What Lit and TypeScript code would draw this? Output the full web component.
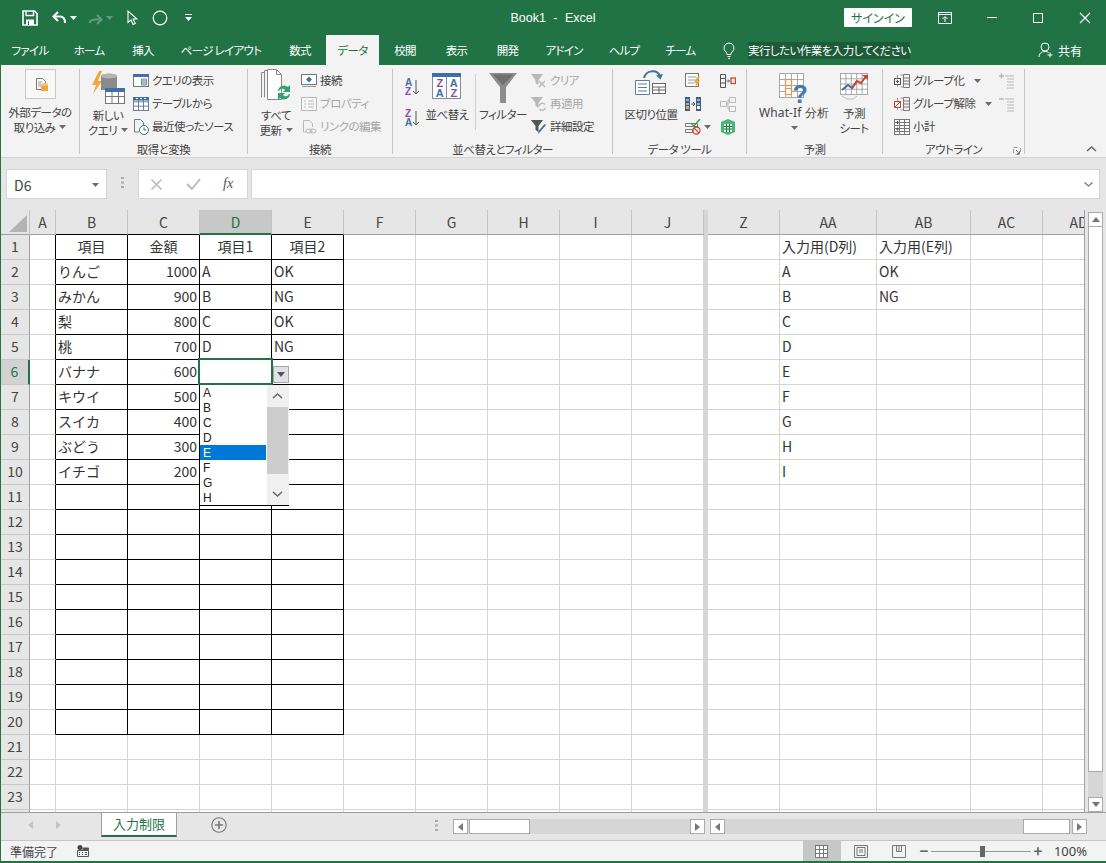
import { LitElement, html, css, svg } from 'lit';
import { customElement } from 'lit/decorators.js';

const GRAY = '#6b6b6b';
const LIGHT = '#b8b8b8';
const BLUE = '#41719c';
const HEAD = '#3f6fa8';
const ORANGE = '#f0a83c';
const GREEN = '#35a06f';
const RED = '#c8472f';

const icon = (w: number, h: number, body: unknown) => html`<svg class="ico" width=${w} height=${h} viewBox="0 0 ${w} ${h}" fill="none">${body}</svg>`;

const caret = (color = GRAY) => icon(7, 4, svg`<path d="M0 0h7L3.5 4z" fill=${color}/>`);

const gridLines = (x: number, y: number, w: number, h: number, cols: number, rows: number, color: string) => {
  const parts = [];
  for (let i = 1; i < cols; i++) parts.push(`M${x + (w * i) / cols} ${y}v${h}`);
  for (let i = 1; i < rows; i++) parts.push(`M${x} ${y + (h * i) / rows}h${w}`);
  return svg`<rect x=${x} y=${y} width=${w} height=${h} fill="#fff" stroke=${color}/><path d=${parts.join('')} stroke=${color}/>`;
};

const ICONS = {
  save: icon(16, 16, svg`<path d="M1 1h11.5L15 3.5V15H1z" stroke="#fff" stroke-width="1.6"/><path d="M4 1.5v4h7.5v-4" stroke="#fff" stroke-width="1.4"/><path d="M4 9.5h8V15H4z" fill="#fff"/><path d="M6 11h1v4H6z" fill="#217346"/>`),
  undo: icon(15, 14, svg`<path d="M6 1L1.5 5.5 6 10" stroke="#fff" stroke-width="2"/><path d="M2 5.5h6c3.5 0 5 2.5 5 6.5" stroke="#fff" stroke-width="2"/>`),
  redo: icon(15, 14, svg`<path d="M9 4L13.5 8.5 9 13" stroke="#5f9b7d" stroke-width="2"/><path d="M13 8.5H8C4 8.5 2 9 1.5 12" stroke="#5f9b7d" stroke-width="2"/>`),
  cursor: icon(11, 16, svg`<path d="M1 1v11.5l3-2.7 2 4.7 2.2-1-2-4.5H10z" stroke="#fff" stroke-width="1.1"/>`),
  circle: icon(16, 16, svg`<circle cx="8" cy="8" r="6.8" stroke="#fff" stroke-width="1.2"/>`),
  custom: icon(7, 7, svg`<path d="M0 0h7v1H0z" fill="#fff"/><path d="M0 3h7L3.5 7z" fill="#fff"/>`),
  display: icon(14, 12, svg`<path d="M.5.5h13v11H.5z" stroke="#fff"/><path d="M.5 2.5h13" stroke="#fff"/><path d="M7 10V5M4.5 7L7 4.5 9.5 7" stroke="#fff"/>`),
  min: icon(10, 2, svg`<path d="M0 .5h10" stroke="#fff"/>`),
  max: icon(10, 10, svg`<path d="M.5.5h9v9h-9z" stroke="#fff"/>`),
  close: icon(12, 12, svg`<path d="M1 1l10 10M11 1L1 11" stroke="#fff" stroke-width="1.1"/>`),
  bulb: icon(12, 17, svg`<path d="M6 1a5 5 0 0 0-3 9c.8.7 1 1.5 1 2.5h4c0-1 .2-1.8 1-2.5a5 5 0 0 0-3-9z" stroke="#fff"/><path d="M4.5 14.5h3M5 16.5h2" stroke="#fff"/>`),
  person: icon(15, 16, svg`<circle cx="7" cy="5" r="4" stroke="#fff"/><path d="M1 15c0-3 2-5.5 6-5.5 1.5 0 2.5.3 3.5 1" stroke="#fff"/><path d="M9.5 13h5M12 10.5v5" stroke="#fff"/>`),

  extData: icon(31, 30, svg`<rect x=".5" y=".5" width="30" height="29" fill="#f8f8f8" stroke="#c8c8c8"/><path d="M11.5 9.5h6l3 3v8h-9z" fill="#fff" stroke="#777"/><path d="M13 13h4M13 15h3M13 17h3" stroke="#999"/><path d="M16 15.5h7V22h-7z" fill=${ORANGE}/><ellipse cx="19.5" cy="15.5" rx="3.5" ry="1.5" fill="#f6c57a"/>`),
  newQuery: icon(34, 36, svg`<path d="M8 2L1 16h4l-3 9 9-13H7l4-10z" fill=${ORANGE}/><path d="M10 7c0-3 16-3 16 0v14H10z" fill="#8a8a8a"/><ellipse cx="18" cy="7" rx="8" ry="2.6" fill="#b5b5b5"/><rect x="14.5" y="19.5" width="19" height="15" fill="#fff" stroke="#777"/><rect x="14" y="19" width="20" height="4" fill=${HEAD}/><path d="M14.5 27.5h19M21 23v11M27.5 23v11" stroke="#777"/>`),
  refreshAll: icon(31, 36, svg`<path d="M.5 3.5v25M3.5 1.5v27M.5 3.5h3M3.5 1.5h3" stroke="#8a8a8a"/><path d="M6.5.5h9l5 5v25h-14z" fill="#fff" stroke="#8a8a8a"/><path d="M15.5.5v5h5" stroke="#8a8a8a"/><path d="M17 22a6 6 0 0 1 10-4l2-2v7h-7l2-2a3.5 3.5 0 0 0-6 1z" fill=${GREEN}/><path d="M29 25a6 6 0 0 1-10 4l-2 2v-7h7l-2 2a3.5 3.5 0 0 0 6-1z" fill=${GREEN}/>`),
  showQuery: icon(16, 16, svg`<rect x=".5" y="1.5" width="15" height="12" fill="#fff" stroke="#777"/><rect y="1" width="16" height="3" fill=${HEAD}/><path d="M8.5 6h5v6h-5z" fill="#dfe6ef" stroke="#7b8ba0"/><path d="M8.5 8h5M8.5 10h5" stroke="#7b8ba0"/>`),
  fromTable: icon(16, 16, svg`${gridLines(0.5, 1.5, 15, 13, 3, 3, '#6d7f96')}<rect y="1" width="16" height="3.5" fill=${HEAD}/><path d="M3 2.5h2M7 2.5h2M11 2.5h2" stroke="#fff"/>`),
  recentSource: icon(16, 16, svg`<path d="M1.5.5h6l3 3V6M1.5.5V13H6" stroke="#777"/><circle cx="11" cy="11" r="4.5" fill="#fff" stroke=${BLUE}/><path d="M11 8.5V11h2.5" stroke=${BLUE}/>`),
  connection: icon(16, 16, svg`<rect x=".5" y="1.5" width="15" height="10" fill="#fff" stroke="#777"/><path d="M8 3.5L11 6.5 8 9.5 5 6.5z" fill=${BLUE}/><path d="M1 13.5h14" stroke="#999"/>`),
  properties: icon(16, 16, svg`<rect x=".5" y="1.5" width="15" height="13" fill="#f8f8f8" stroke=${LIGHT}/><path d="M3 5h2M7 5h6M3 8h2M7 8h6M3 11h2M7 11h6" stroke=${LIGHT}/>`),
  editLinks: icon(16, 16, svg`<path d="M2.5 1.5h6l3 3V8M2.5 1.5V13H5" stroke=${LIGHT}/><ellipse cx="8" cy="12" rx="3" ry="2" stroke=${LIGHT}/><ellipse cx="12" cy="12" rx="3" ry="2" stroke=${LIGHT}/>`),
  sortAZ: icon(15, 20, svg`<text x="0" y="9" font-family="Liberation Sans" font-size="10" font-weight="700" fill=${HEAD}>A</text><text x="0" y="18" font-family="Liberation Sans" font-size="10" font-weight="700" fill="#8d4da0">Z</text><path d="M11 3v14M8 14l3 3 3-3" stroke="#555"/>`),
  sortZA: icon(15, 20, svg`<text x="0" y="9" font-family="Liberation Sans" font-size="10" font-weight="700" fill="#8d4da0">Z</text><text x="0" y="18" font-family="Liberation Sans" font-size="10" font-weight="700" fill=${HEAD}>A</text><path d="M11 3v14M8 14l3 3 3-3" stroke="#555"/>`),
  sortBig: icon(30, 38, svg`<rect x=".5" y="4.5" width="28" height="25" fill="#fff" stroke="#7f8fa3"/><rect y="4" width="29" height="4" fill=${HEAD}/><path d="M14.5 8v22" stroke="#7f8fa3"/><g font-family="Liberation Sans" font-size="11" font-weight="700" text-anchor="middle"><text x="7.5" y="18" fill="#8d4da0">Z</text><text x="21.5" y="18" fill=${HEAD}>A</text><text x="7.5" y="28" fill=${HEAD}>A</text><text x="21.5" y="28" fill="#8d4da0">Z</text></g>`),
  filterBig: icon(28, 38, svg`<path d="M0 4h28L17 18v16h-6V18z" fill="#8c8c8c"/><path d="M4 5.5h20L14 16z" fill="#6f6f6f"/>`),
  clear: icon(16, 16, svg`<path d="M0 1h12L7.5 7v5l-3-2V7z" fill=${LIGHT}/><path d="M8 8l6 6M14 8l-6 6" stroke=${LIGHT} stroke-width="1.5"/>`),
  reapply: icon(16, 16, svg`<path d="M0 1h12L7.5 7v5l-3-2V7z" fill=${LIGHT}/><path d="M8 10a3.5 3.5 0 0 1 6-1.5M14.5 12a3.5 3.5 0 0 1-6 1" stroke=${LIGHT} stroke-width="1.3"/>`),
  advanced: icon(16, 16, svg`<path d="M0 1h12L7.5 7v6l-3-2V7z" fill="#555"/><path d="M15 6l-6 7-2 2 .5-3 6-7z" fill=${BLUE}/>`),
  textCols: icon(32, 38, svg`<path d="M.5 11.5h14v14H.5z" fill="#fff" stroke="#5b7fa6"/><path d="M3 15h9M3 18.5h9M3 22h9" stroke="#5b7fa6"/><rect x="17.5" y="14.5" width="13" height="10" fill="#fff" stroke="#666"/><path d="M17.5 18h13M17.5 21h13M24 18v6.5" stroke="#666"/><path d="M9 9C11 1 22 0 25 7" stroke=${BLUE} stroke-width="2"/><path d="M21 6.5l4.5 4 2.5-5.5z" fill=${BLUE}/>`),
  flash: icon(16, 16, svg`<rect x=".5" y=".5" width="13" height="13" fill="#fff" stroke="#777"/><path d="M3 4h8M3 7h8M3 10h6" stroke="#999"/><path d="M12 4l-3 6h2l-1 5 5-7h-2.5l2-4z" fill=${ORANGE}/>`),
  dedupe: icon(16, 16, svg`<path d="M0 1h5v14H0zM11 1h5v14h-5z" fill="#3f5f85"/><path d="M1 4h3M1 8h3M12 4h3M12 8h3" stroke="#fff"/><path d="M1 10h3v3H1z" fill=${ORANGE}/><path d="M12 10h3v3h-3z" fill="#fff"/><path d="M6 8h3M8 6l2 2-2 2" stroke="#555"/>`),
  validate: icon(16, 16, svg`<path d="M.5 4.5h12v3h-12zM.5 10.5h7v3h-7z" stroke="#777"/><path d="M6 4l3 3 6-7" stroke=${GREEN} stroke-width="1.5"/><circle cx="11.5" cy="11.5" r="3.5" fill="#fff" stroke=${RED} stroke-width="1.3"/><path d="M9 9l5 5" stroke=${RED} stroke-width="1.3"/>`),
  consolidate: icon(16, 16, svg`<path d="M.5 1.5h5v13h-5z" stroke="#555"/><path d="M.5 5.5h5M.5 10h5" stroke="#555"/><path d="M6.5 8h3M8 6.5L9.5 8 8 9.5" stroke=${BLUE}/><rect x="11" y="5" width="4.5" height="5.5" stroke=${RED} stroke-width="1.3"/>`),
  relation: icon(16, 16, svg`<path d="M.5 5.5h6v5h-6zM9.5 1.5h6v5h-6zM9.5 10.5h6v5h-6z" stroke=${LIGHT}/><path d="M6.5 8H8V4h1.5M8 8v5h1.5" stroke=${LIGHT}/>`),
  model: icon(16, 16, svg`<path d="M8 0l7 3v10l-7 3-7-3V3z" fill="#4fb27a"/><path d="M4 5h8v8H4z" fill="#d6efe0"/><path d="M4 7.5h8M4 10h8M6.5 5v8M9.5 5v8" stroke="#2a7a4b"/>`),
  whatIf: icon(30, 37, svg`${gridLines(0.5, 4.5, 24, 24, 4, 4, '#a8a8a8')}<rect x="6.5" y="10.5" width="6" height="6" fill="#fff" stroke="#d99a5b" stroke-width="1.3"/><rect x="6.5" y="19.5" width="6" height="6" fill="#fff" stroke="#d99a5b" stroke-width="1.3"/><text x="21" y="34" font-family="Liberation Sans" font-size="25" font-weight="700" text-anchor="middle" fill="#3e78b5">?</text>`),
  forecast: icon(29, 37, svg`${gridLines(0.5, 4.5, 27, 21, 5, 4, '#a8a8a8')}<path d="M2 21l6-5 4 3 5-7" stroke=${BLUE} stroke-width="2"/><path d="M12 19l5-7 4 2 6-8" stroke=${RED} stroke-width="2"/><path d="M22 6h6v5z" fill=${RED}/><path d="M2 27l5 3h6l4-3" stroke="#bbb"/>`),
  group: icon(16, 16, svg`<rect x=".5" y="5.5" width="6" height="6" stroke="#555"/><path d="M2 8.5h3M3.5 7v3" stroke="#555"/><path d="M9.5 1.5h6v13h-6z" stroke="#777"/><path d="M9.5 5h6M9.5 8h6M9.5 11h6" stroke="#777"/><path d="M6.5 2h3M6.5 14h3M3.5 2v3M3.5 12v2" stroke="#999"/>`),
  ungroup: icon(16, 16, svg`<rect x=".5" y="5.5" width="6" height="6" stroke=${RED}/><path d="M1 11L6 6" stroke=${RED}/><path d="M9.5 1.5h6v13h-6z" stroke="#777"/><path d="M9.5 5h6M9.5 8h6M9.5 11h6" stroke="#777"/><path d="M6.5 2h3M6.5 14h3M3.5 2v3M3.5 12v2" stroke="#999"/>`),
  subtotal: icon(16, 16, svg`${gridLines(0.5, 0.5, 15, 15, 3, 5, '#777')}<path d="M2 3.5h3M3.5 2v3M2 10h3M3.5 8.5v3" stroke="#555"/>`),
  showDetail: icon(15, 16, svg`<path d="M6 3h9M8 6h7M8 9h7M8 12h7M8 15h7" stroke=${LIGHT}/><path d="M0 3h5M2.5.5v5" stroke=${LIGHT} stroke-width="1.5"/>`),
  hideDetail: icon(15, 16, svg`<path d="M6 3h9M8 6h7M8 9h7M8 12h7M8 15h7" stroke=${LIGHT}/><path d="M0 3h5" stroke=${LIGHT} stroke-width="1.5"/>`),
  launcher: icon(8, 8, svg`<path d="M.5.5h7v7h-7z" stroke="#999" stroke-dasharray="4 3.5"/><path d="M3 3l3.5 3.5M6.5 4v2.5H4" stroke="#777"/>`),
  chevUp: icon(11, 6, svg`<path d="M1 5l4.5-4L10 5" stroke="#666" stroke-width="1.5"/>`),
  chevDown: icon(9, 5, svg`<path d="M.5.5L4.5 4l4-3.5" stroke="#777" stroke-width="1.3"/>`),
  cross: icon(13, 13, svg`<path d="M1.5 1.5l10 10M11.5 1.5l-10 10" stroke=${LIGHT} stroke-width="1.5"/>`),
  check: icon(15, 13, svg`<path d="M1 6l5 5 8-10" stroke=${LIGHT} stroke-width="1.8"/>`),
  dots: icon(3, 11, svg`<path d="M0 0h3v2H0zM0 4.5h3v2H0zM0 9h3v2H0z" fill="#aaa"/>`),
  plusCircle: icon(16, 16, svg`<circle cx="8" cy="8" r="7.2" stroke="#777" stroke-width="1.1"/><path d="M4 8h8M8 4v8" stroke="#777" stroke-width="1.6"/>`),
  macro: icon(12, 12, svg`<circle cx="3" cy="2.5" r="2.5" fill="#444"/><path d="M.5 5.5h11v6H.5z" stroke="#555"/><path d="M2 7.5h1M5 7.5h1M8 7.5h2M2 9.5h1M5 9.5h1M8 9.5h2M6 3h5.5v2H6z" fill="#555" stroke="#555"/>`),
  viewNormal: icon(13, 13, svg`${gridLines(0.5, 0.5, 12, 12, 3, 3, '#777')}`),
  viewPage: icon(14, 13, svg`<path d="M.5.5h13v12H.5z" stroke="#777"/><path d="M3 2.5h8v8H3zM5 5h4M5 7h4" stroke="#777"/>`),
  viewBreak: icon(14, 13, svg`<path d="M.5.5h13v12H.5z" stroke="#777"/><path d="M4.5.5v6h5v-6M7 .5v6" stroke="#777"/>`),
};

const tri = (dir: 'l' | 'r' | 'u' | 'd', color = '#777') => {
  const d = { l: 'M5 0v8L0 4z', r: 'M0 0v8l5-4z', u: 'M0 5h8L4 0z', d: 'M0 0h8L4 5z' }[dir];
  return dir === 'l' || dir === 'r'
    ? icon(5, 8, svg`<path d=${d} fill=${color}/>`)
    : icon(8, 5, svg`<path d=${d} fill=${color}/>`);
};

const TABS: [string, number][] = [
  ['ファイル', 60], ['ホーム', 58], ['挿入', 50], ['ページ レイアウト', 106], ['数式', 52], ['データ', 53],
  ['校閲', 52], ['表示', 51], ['開発', 51], ['アドイン', 62], ['ヘルプ', 58], ['チーム', 55],
];

const LEFT_COLS: [string, number][] = [['A', 26], ['B', 72], ['C', 72], ['D', 72], ['E', 72], ['F', 72], ['G', 72], ['H', 72], ['I', 72], ['J', 72]];
const RIGHT_COLS: [string, number][] = [['Z', 72], ['AA', 97], ['AB', 94], ['AC', 72], ['AD', 72]];

// row -> col letter -> text
const DATA: Record<number, Record<string, string>> = {
  1: { B: '項目', C: '金額', D: '項目1', E: '項目2', AA: '入力用(D列)', AB: '入力用(E列)' },
  2: { B: 'りんご', C: '1000', D: 'A', E: 'OK', AA: 'A', AB: 'OK' },
  3: { B: 'みかん', C: '900', D: 'B', E: 'NG', AA: 'B', AB: 'NG' },
  4: { B: '梨', C: '800', D: 'C', E: 'OK', AA: 'C' },
  5: { B: '桃', C: '700', D: 'D', E: 'NG', AA: 'D' },
  6: { B: 'バナナ', C: '600', AA: 'E' },
  7: { B: 'キウイ', C: '500', AA: 'F' },
  8: { B: 'スイカ', C: '400', AA: 'G' },
  9: { B: 'ぶどう', C: '300', AA: 'H' },
  10: { B: 'イチゴ', C: '200', AA: 'I' },
};

const ROWS = Array.from({ length: 24 }, (_, i) => i + 1);
const LIST = ['A', 'B', 'C', 'D', 'E', 'F', 'G', 'H'];

@customElement('app-root')
export class AppRoot extends LitElement {
  static styles = css`
    :host {
      display: block;
      width: 1106px;
      height: 863px;
      overflow: hidden;
      font-family: "Noto Sans CJK JP", "Noto Sans", sans-serif;
      color: #444;
    }
    .ico { display: block; flex: none; }
    .app { display: flex; flex-direction: column; height: 863px; background: #e6e6e6; }

    /* title bar */
    .title {
      height: 35px;
      background: #217346;
      color: #fff;
      display: grid;
      grid-template-columns: 1fr auto 1fr;
      align-items: center;
      font-size: 12px;
    }
    .qat { display: flex; align-items: center; padding-left: 22px; }
    .m3 { margin-left: 3px; }
    .m11 { margin-left: 11px; }
    .m14 { margin-left: 14px; }
    .m17 { margin-left: 17px; }
    .book { font-family: "Liberation Sans", sans-serif; font-size: 12.5px; word-spacing: 4px; }
    .winbtns { display: flex; justify-content: flex-end; align-items: center; padding-right: 15px; }
    .signin {
      width: 68px;
      height: 19px;
      background: #fff;
      color: #217346;
      border-radius: 1px;
      font-size: 12px;
      line-height: 19px;
      text-align: center;
      font-feature-settings: "palt";
    }
    .wb1 { margin-left: 26px; }
    .wb2 { margin-left: 35px; }
    .wb3 { margin-left: 36px; }

    /* tabs */
    .tabs {
      height: 30px;
      background: #217346;
      color: #fff;
      display: flex;
      align-items: stretch;
      font-size: 11.5px;
      letter-spacing: -0.7px;
      font-feature-settings: "palt";
    }
    .tab { flex: none; text-align: center; line-height: 30px; }
    .tab.on { background: #f3f3f3; color: #217346; }
    .tell { display: flex; align-items: center; margin-left: 15px; flex: 1; padding-right: 24px; }
    .tell-text {
      margin-left: 13px;
      width: 162px;
      height: 17px;
      line-height: 17px;
      background: #1c5a38;
      white-space: nowrap;
      letter-spacing: -0.55px;
    }
    .share { margin-left: auto; display: flex; align-items: center; gap: 5px; font-size: 12px; letter-spacing: 0; }

    .body { flex: 1; display: flex; flex-direction: column; border-left: 1px solid #217346; min-height: 0; }

    /* ribbon */
    .ribbon {
      height: 93px;
      box-sizing: border-box;
      background: #f3f3f3;
      border-bottom: 1px solid #d2d2d2;
      padding-top: 4px;
      display: flex;
      font-size: 11.5px;
      letter-spacing: -0.5px;
      font-feature-settings: "palt";
      line-height: 14.5px;
      white-space: nowrap;
    }
    .grp {
      position: relative;
      flex: none;
      box-sizing: border-box;
      height: 85px;
      border-right: 1px solid #c6c6c6;
    }
    .g1 { width: 79px; }
    .g2 { width: 168px; }
    .g3 { width: 145px; }
    .g4 { width: 220px; }
    .g5 { width: 134px; }
    .g6 { width: 136px; }
    .g7 { width: 142px; }
    .grp-body { display: flex; height: 73px; }
    .grp-label { text-align: center; line-height: 14px; color: #444; }
    .launcher { position: absolute; right: 3px; bottom: -1px; }
    .big { display: flex; flex-direction: column; align-items: center; flex: none; text-align: center; }
    .w78 { width: 78px; }
    .w50 { width: 50px; margin-left: 3px; }
    .w44 { width: 44px; margin-left: 5px; }
    .w56 { width: 56px; margin-left: 10px; }
    .w74 { width: 74px; margin-left: 10px; }
    .w40 { width: 40px; margin-left: 3px; }
    .gap6 { margin-top: 6px; }
    .gap3 { margin-top: 3px; }
    .caret-line { display: flex; align-items: center; justify-content: center; gap: 4px; }
    .caret-below { display: flex; justify-content: center; padding-top: 5px; }
    .wif { font-family: "Noto Sans", sans-serif; font-size: 12px; letter-spacing: 0.1px; }
    .list { display: flex; flex-direction: column; flex: none; }
    .li { height: 23px; display: flex; align-items: center; gap: 3px; }
    .li.off { color: #a6a6a6; }
    .li .cm { margin-left: 7px; }
    .sortcol { margin-left: 12px; padding-top: 8px; display: flex; flex-direction: column; gap: 11px; flex: none; }
    .vsep { width: 1px; height: 56px; margin: 5px 0 0 6px; background: #d0d0d0; flex: none; }
    .ml7 { margin-left: 7px; }
    .ml6 { margin-left: 6px; }
    .ml11 { margin-left: 11px; }
    .col1 { width: 28px; }
    .g7 .outline { width: 105px; }
    .collapse { align-self: flex-end; margin: 0 9px 5px auto; }

    /* formula bar */
    .fbar { height: 52px; box-sizing: border-box; padding: 11px 0 0 5px; display: flex; align-items: flex-start; background: #e6e6e6; }
    .namebox {
      width: 101px;
      height: 30px;
      box-sizing: border-box;
      background: #fff;
      border: 1px solid #d4d4d4;
      display: flex;
      align-items: center;
      justify-content: space-between;
      padding: 2px 7px 0;
      font-size: 14px;
    }
    .fdots { margin: 8px 0 0 14px; }
    .fxbox {
      margin-left: 14px;
      width: 110px;
      height: 30px;
      box-sizing: border-box;
      background: #fff;
      border: 1px solid #d4d4d4;
      display: flex;
      align-items: center;
      padding-left: 11px;
    }
    .fx { margin-left: 22px; font-family: "Liberation Serif", serif; font-style: italic; font-size: 14px; color: #555; }
    .fxbox .check { margin-left: 23px; }
    .finput {
      margin-left: 3px;
      width: 849px;
      height: 30px;
      box-sizing: border-box;
      background: #fff;
      border: 1px solid #d4d4d4;
      display: flex;
      align-items: center;
      justify-content: flex-end;
      padding-right: 6px;
    }

    /* sheet */
    .sheet-area { height: 602px; display: flex; background: #fff; }
    .pane { position: relative; overflow: hidden; flex: none; height: 602px; }
    .pane-l { width: 703px; }
    .pane-r { width: 377px; box-sizing: border-box; border-right: 1px solid #9f9f9f; }
    .split { width: 4px; flex: none; background: #d6d6d6; }
    .grid { display: grid; grid-auto-rows: 25px; font-size: 14px; color: #333; }
    .c {
      box-sizing: border-box;
      border-right: 1px solid #d4d4d4;
      border-bottom: 1px solid #d4d4d4;
      padding: 0 2px;
      line-height: 23px;
      white-space: nowrap;
      overflow: hidden;
    }
    .num { text-align: right; }
    .mid { text-align: center; }
    .br { border-right-color: #000; }
    .bb { border-bottom-color: #000; }
    .hc {
      background: #e6e6e6;
      box-sizing: border-box;
      border-right: 1px solid #c4c4c4;
      border-bottom: 1px solid #9f9f9f;
      text-align: center;
      line-height: 24px;
      color: #444;
      white-space: nowrap;
      overflow: hidden;
    }
    .hc.bb { border-bottom-color: #000; }
    .hc.sel { background: #c8c8c8; color: #217346; border-bottom: 2px solid #217346; }
    .rh {
      background: #e6e6e6;
      box-sizing: border-box;
      border-right: 1px solid #9f9f9f;
      border-bottom: 1px solid #c8c8c8;
      text-align: center;
      line-height: 22px;
      color: #444;
    }
    .rh.sel { background: #d2d2d2; color: #217346; border-right: 2px solid #217346; }
    .corner { position: relative; display: flex; align-items: flex-end; justify-content: flex-end; padding: 0 2px 2px 0; }
    .cursor {
      position: absolute;
      left: 197px;
      top: 148px;
      width: 75px;
      height: 27px;
      box-sizing: border-box;
      border: 2px solid #217346;
    }
    .ddbtn {
      position: absolute;
      left: 272px;
      top: 156px;
      width: 16px;
      height: 17px;
      box-sizing: border-box;
      background: #dfe2e8;
      border: 1px solid #a6a6a6;
      display: flex;
      align-items: center;
      justify-content: center;
    }
    .popup {
      position: absolute;
      left: 198px;
      top: 175px;
      width: 90px;
      height: 121px;
      box-sizing: border-box;
      background: #fff;
      border-left: 1px solid #000;
      border-bottom: 1px solid #000;
      display: flex;
      font-family: "Liberation Sans", sans-serif;
      font-size: 12px;
      color: #222;
    }
    .opts { width: 66px; flex: none; }
    .opt { height: 15px; line-height: 16px; padding-left: 3px; }
    .opt.on { background: #0078d7; color: #fff; }
    .pscroll { flex: 1; margin-left: 1px; background: #f0f0f0; display: flex; flex-direction: column; align-items: center; padding: 0 1px 0 0; }
    .parrow { height: 22px; display: flex; align-items: center; justify-content: center; flex: none; }
    .pthumb { width: 100%; height: 67px; background: #cdcdcd; flex: none; }
    .pspace { flex: 1; }
    .vs { width: 21px; flex: none; background: #e6e6e6; padding: 2px 3px 0 3px; box-sizing: border-box; display: flex; flex-direction: column; }
    .sbtn {
      box-sizing: border-box;
      background: #fff;
      border: 1px solid #ababab;
      display: flex;
      align-items: center;
      justify-content: center;
      flex: none;
    }
    .vbtn { width: 15px; height: 15px; }
    .vthumb { width: 15px; height: 545px; box-sizing: border-box; background: #fff; border: 1px solid #ababab; border-top: 0; }
    .vtrack { width: 15px; flex: 1; background: #d6d6d6; }

    /* sheet tabs */
    .sbar {
      height: 29px;
      box-sizing: border-box;
      background: #e6e6e6;
      border-top: 1px solid #9f9f9f;
      border-bottom: 1px solid #c6c6c6;
      display: flex;
      align-items: flex-start;
    }
    .nav1 { margin: 8px 0 0 27px; }
    .nav2 { margin: 8px 0 0 23px; }
    .stab {
      margin-left: 40px;
      width: 76px;
      height: 24px;
      box-sizing: border-box;
      background: #fff;
      border-left: 1px solid #9f9f9f;
      border-right: 1px solid #9f9f9f;
      border-bottom: 2px solid #217346;
      color: #217346;
      font-size: 13px;
      line-height: 22px;
      text-align: center;
    }
    .addsheet { margin: 4px 0 0 34px; }
    .sdots { margin: 7px 0 0 208px; }
    .hs { display: flex; height: 15px; margin-top: 6px; background: #d6d6d6; flex: none; }
    .hs1 { width: 252px; margin-left: 15px; }
    .hs2 { width: 377px; margin-left: 5px; }
    .hbtn { width: 15px; height: 15px; }
    .hthumb { height: 15px; box-sizing: border-box; background: #fff; border: 1px solid #ababab; flex: none; }
    .ht1 { width: 61px; margin-left: 1px; }
    .ht2 { width: 47px; margin-left: auto; }
    .hend { margin-left: auto; }
    .ht2 + .hend { margin-left: 2px; }

    /* status */
    .status {
      height: 20px;
      background: #f3f3f3;
      display: flex;
      align-items: center;
      font-size: 12px;
      color: #444;
    }
    .ready { margin-left: 9px; }
    .macro { margin-left: 19px; }
    .views { margin-left: auto; display: flex; align-items: center; height: 20px; }
    .v { height: 20px; display: flex; align-items: center; justify-content: center; width: 38px; }
    .v.on { background: #c6c6c6; }
    .v2 { margin-left: 1px; }
    .zoom { display: flex; align-items: center; }
    .zbtn { font-size: 15px; font-weight: 700; width: 12px; text-align: center; color: #666; line-height: 20px; }
    .slider { width: 100px; height: 1px; background: #999; margin: 0 1px; position: relative; }
    .knob { position: absolute; left: 49px; top: -5px; width: 5px; height: 11px; background: #666; }
    .pct { margin: 0 19px 0 10px; font-size: 13px; font-family: "Noto Sans", sans-serif; }
    .strip { height: 2px; background: #217346; flex: none; }
  `;

  private sheetGrid(cols: [string, number][], withRowHead: boolean) {
    const tpl = (withRowHead ? '29px ' : '') + cols.map((c) => `${c[1]}px`).join(' ');
    const inTable = (c: string) => ['B', 'C', 'D', 'E'].includes(c);
    return html`
      <div class="grid" style="grid-template-columns:${tpl}">
        ${withRowHead
          ? html`<div class="hc corner">${icon(18, 17, svg`<path d="M18 0v17H0z" fill="#b4b4b4"/>`)}</div>`
          : ''}
        ${cols.map(
          ([name]) => html`<div class="hc ${name === 'D' ? 'sel' : ''} ${inTable(name) ? 'bb' : ''}">${name}</div>`,
        )}
        ${ROWS.map(
          (r) => html`
            ${withRowHead ? html`<div class="rh ${r === 6 ? 'sel' : ''}">${r}</div>` : ''}
            ${cols.map(([name]) => {
              const text = DATA[r]?.[name] ?? '';
              const boxed = r <= 20 && (inTable(name) || name === 'A');
              const classes = [
                'c',
                boxed ? 'br' : '',
                r <= 20 && inTable(name) ? 'bb' : '',
                name === 'C' && r > 1 ? 'num' : '',
                r === 1 && inTable(name) ? 'mid' : '',
              ].join(' ');
              return html`<div class=${classes}>${text}</div>`;
            })}
          `,
        )}
      </div>
    `;
  }

  private li(ic: unknown, label: string, off = false) {
    return html`<div class="li ${off ? 'off' : ''}">${ic}<span>${label}</span></div>`;
  }

  private ribbon() {
    return html`
      <div class="ribbon">
        <div class="grp g1">
          <div class="grp-body">
            <div class="big w78">
              ${ICONS.extData}
              <div class="gap6">外部データの</div>
              <div class="caret-line"><span>取り込み</span>${caret()}</div>
            </div>
          </div>
        </div>
        <div class="grp g2">
          <div class="grp-body">
            <div class="big w50">
              ${ICONS.newQuery}
              <div class="gap3">新しい</div>
              <div class="caret-line"><span>クエリ</span>${caret()}</div>
            </div>
            <div class="list">
              ${this.li(ICONS.showQuery, 'クエリの表示')}
              ${this.li(ICONS.fromTable, 'テーブルから')}
              ${this.li(ICONS.recentSource, '最近使ったソース')}
            </div>
          </div>
          <div class="grp-label">取得と変換</div>
        </div>
        <div class="grp g3">
          <div class="grp-body">
            <div class="big w50">
              ${ICONS.refreshAll}
              <div class="gap3">すべて</div>
              <div class="caret-line"><span>更新</span>${caret()}</div>
            </div>
            <div class="list">
              ${this.li(ICONS.connection, '接続')}
              ${this.li(ICONS.properties, 'プロパティ', true)}
              ${this.li(ICONS.editLinks, 'リンクの編集', true)}
            </div>
          </div>
          <div class="grp-label">接続</div>
        </div>
        <div class="grp g4">
          <div class="grp-body">
            <div class="sortcol">${ICONS.sortAZ}${ICONS.sortZA}</div>
            <div class="big w44">${ICONS.sortBig}<div>並べ替え</div></div>
            <div class="vsep"></div>
            <div class="big w44">${ICONS.filterBig}<div>フィルター</div></div>
            <div class="list ml6">
              ${this.li(ICONS.clear, 'クリア', true)}
              ${this.li(ICONS.reapply, '再適用', true)}
              ${this.li(ICONS.advanced, '詳細設定')}
            </div>
          </div>
          <div class="grp-label">並べ替えとフィルター</div>
        </div>
        <div class="grp g5">
          <div class="grp-body">
            <div class="big w56">${ICONS.textCols}<div>区切り位置</div></div>
            <div class="list ml6 col1">
              <div class="li">${ICONS.flash}</div>
              <div class="li">${ICONS.dedupe}</div>
              <div class="li">${ICONS.validate}${caret()}</div>
            </div>
            <div class="list ml7">
              <div class="li">${ICONS.consolidate}</div>
              <div class="li">${ICONS.relation}</div>
              <div class="li">${ICONS.model}</div>
            </div>
          </div>
          <div class="grp-label">データ ツール</div>
        </div>
        <div class="grp g6">
          <div class="grp-body">
            <div class="big w74">
              ${ICONS.whatIf}
              <div class="wif">What-If 分析</div>
              <div class="caret-below">${caret()}</div>
            </div>
            <div class="big w40">
              ${ICONS.forecast}
              <div>予測</div>
              <div>シート</div>
            </div>
          </div>
          <div class="grp-label">予測</div>
        </div>
        <div class="grp g7">
          <div class="grp-body">
            <div class="list ml11 outline">
              <div class="li">${ICONS.group}<span>グループ化</span><span class="cm">${caret()}</span></div>
              <div class="li">${ICONS.ungroup}<span>グループ解除</span><span class="cm">${caret()}</span></div>
              <div class="li">${ICONS.subtotal}<span>小計</span></div>
            </div>
            <div class="list">
              <div class="li">${ICONS.showDetail}</div>
              <div class="li">${ICONS.hideDetail}</div>
            </div>
          </div>
          <div class="grp-label">アウトライン</div>
          <div class="launcher">${ICONS.launcher}</div>
        </div>
        <div class="collapse">${ICONS.chevUp}</div>
      </div>
    `;
  }

  render() {
    return html`
      <div class="app">
        <div class="title">
          <div class="qat">
            ${ICONS.save}
            <span class="m14">${ICONS.undo}</span>
            <span class="m3">${caret('#fff')}</span>
            <span class="m11">${ICONS.redo}</span>
            <span class="m3">${caret('#5f9b7d')}</span>
            <span class="m14">${ICONS.cursor}</span>
            <span class="m14">${ICONS.circle}</span>
            <span class="m17">${ICONS.custom}</span>
          </div>
          <div class="book">Book1 - Excel</div>
          <div class="winbtns">
            <div class="signin">サインイン</div>
            <span class="wb1">${ICONS.display}</span>
            <span class="wb2">${ICONS.min}</span>
            <span class="wb3">${ICONS.max}</span>
            <span class="wb3">${ICONS.close}</span>
          </div>
        </div>

        <div class="tabs">
          ${TABS.map(([name, w], i) => html`<div class="tab ${i === 5 ? 'on' : ''}" style="width:${w}px">${name}</div>`)}
          <div class="tell">
            ${ICONS.bulb}
            <div class="tell-text">実行したい作業を入力してください</div>
            <div class="share">${ICONS.person}<span>共有</span></div>
          </div>
        </div>

        <div class="body">
          ${this.ribbon()}

          <div class="fbar">
            <div class="namebox"><span>D6</span>${caret()}</div>
            <div class="fdots">${ICONS.dots}</div>
            <div class="fxbox">
              ${ICONS.cross}
              <span class="check">${ICONS.check}</span>
              <span class="fx">fx</span>
            </div>
            <div class="finput">${ICONS.chevDown}</div>
          </div>

          <div class="sheet-area">
            <div class="pane pane-l">
              ${this.sheetGrid(LEFT_COLS, true)}
              <div class="cursor"></div>
              <div class="ddbtn">${tri('d', '#555')}</div>
              <div class="popup">
                <div class="opts">
                  ${LIST.map((o) => html`<div class="opt ${o === 'E' ? 'on' : ''}">${o}</div>`)}
                </div>
                <div class="pscroll">
                  <div class="parrow">${ICONS.chevUp}</div>
                  <div class="pthumb"></div>
                  <div class="pspace"></div>
                  <div class="parrow">${icon(11, 6, svg`<path d="M1 1l4.5 4L10 1" stroke="#666" stroke-width="1.5"/>`)}</div>
                </div>
              </div>
            </div>
            <div class="split"></div>
            <div class="pane pane-r">${this.sheetGrid(RIGHT_COLS, false)}</div>
            <div class="vs">
              <div class="sbtn vbtn">${tri('u')}</div>
              <div class="vthumb"></div>
              <div class="vtrack"></div>
              <div class="sbtn vbtn">${tri('d')}</div>
            </div>
          </div>

          <div class="sbar">
            <span class="nav1">${tri('l', '#c4c4c4')}</span>
            <span class="nav2">${tri('r', '#c4c4c4')}</span>
            <div class="stab">入力制限</div>
            <span class="addsheet">${ICONS.plusCircle}</span>
            <span class="sdots">${ICONS.dots}</span>
            <div class="hs hs1">
              <div class="sbtn hbtn">${tri('l')}</div>
              <div class="hthumb ht1"></div>
              <div class="sbtn hbtn hend">${tri('r')}</div>
            </div>
            <div class="hs hs2">
              <div class="sbtn hbtn">${tri('l')}</div>
              <div class="hthumb ht2"></div>
              <div class="sbtn hbtn hend">${tri('r')}</div>
            </div>
          </div>

          <div class="status">
            <span class="ready">準備完了</span>
            <span class="macro">${ICONS.macro}</span>
            <div class="views">
              <div class="v on">${ICONS.viewNormal}</div>
              <div class="v v2">${ICONS.viewPage}</div>
              <div class="v">${ICONS.viewBreak}</div>
              <div class="zoom">
                <span class="zbtn">−</span>
                <div class="slider"><div class="knob"></div></div>
                <span class="zbtn">+</span>
              </div>
              <span class="pct">100%</span>
            </div>
          </div>
        </div>
        <div class="strip"></div>
      </div>
    `;
  }
}
